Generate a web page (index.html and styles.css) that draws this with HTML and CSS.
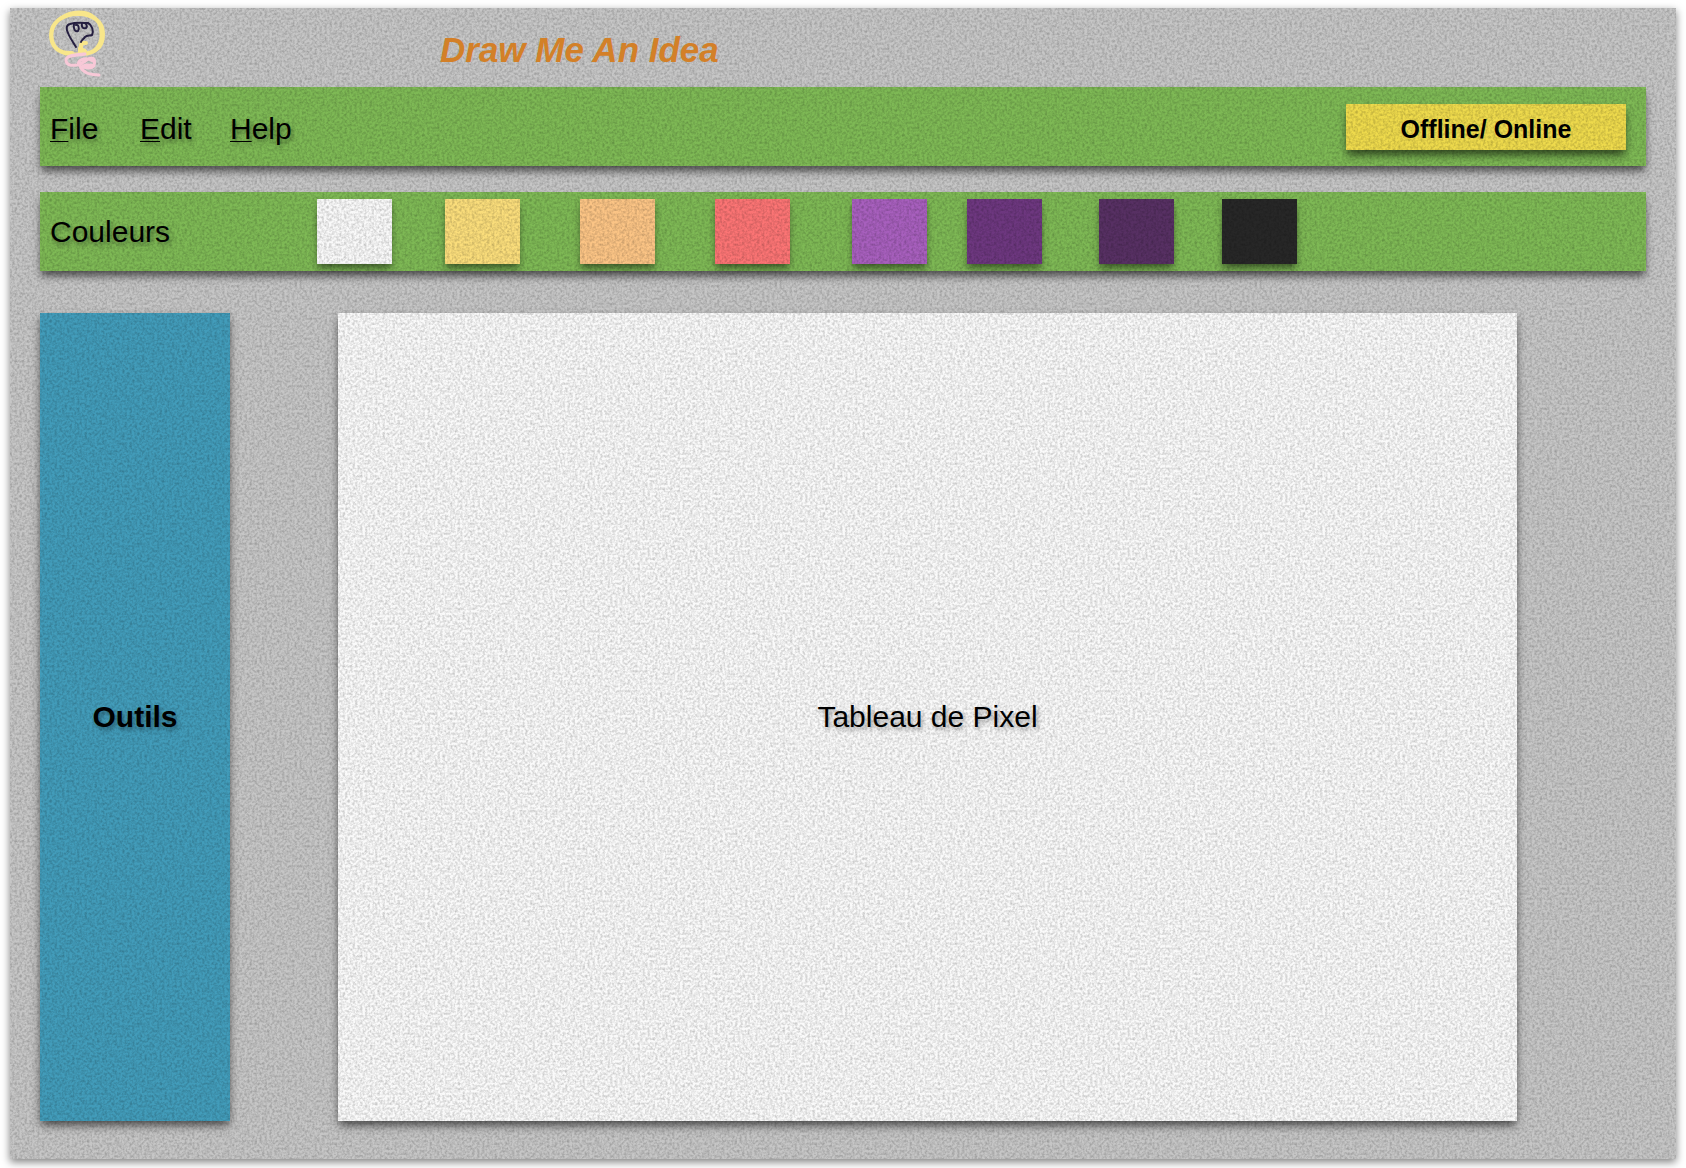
FILE: index.html
```html
<!DOCTYPE html>
<html lang="fr">
<head>
<meta charset="utf-8">
<title>Draw Me An Idea</title>
<link rel="stylesheet" href="styles.css">
</head>
<body>
<div class="app textured">
  <header class="header">
    <svg class="logo" viewBox="46 8 62 72" fill="none" stroke-linecap="round" stroke-linejoin="round" aria-hidden="true">
      <g stroke="#f8e68a">
        <path stroke-width="4" d="M88 53C98 51 103 44 103 34C103 21 92 14 78 14C62 14 51 23 51 35C51 46 58 54 72 53"/>
        <path stroke-width="3" d="M66 54C55 50 51 42 52 32C54 21 65 12 79 12C91 12 100 19 101 32C102 42 97 51 87 54H68"/>
        <path stroke-width="4" d="M81 52V45L83 43L86 43M83 50L85 51M80 48V53"/>
      </g>
      <path stroke="#251f40" stroke-width="2" d="M76 47C73 42 70 38 68 33C66 29 66 25 70 24C76 22 82 23 88 23C92 25 94 31 92 35C90 36 87 35 85 37C84 39 81 40 81 42"/>
      <path stroke="#251f40" stroke-width="2" d="M74 24C73 29 75 32 78 31C80 28 78 24 76 25M82 23C81 27 83 29 86 28C88 26 86 23 84 23"/>
      <path stroke="#f8c8d7" stroke-width="3" d="M84 54C75 54 66 56 66 60C66 65 71 66 77 65C84 64 86 59 91 58C95 58 95 62 94 65C93 69 88 68 83 67C78 66 77 62 81 60C85 58 90 59 93 61M68 57C74 55 80 55 85 54M80 66C82 71 88 75 99 75M83 66C87 64 90 65 94 66"/>
    </svg>
    <h1 class="title">Draw Me An Idea</h1>
  </header>

  <nav class="bar menu textured" aria-label="Menu">
    <button class="menu-item" type="button"><span class="key">F</span>ile</button>
    <button class="menu-item" type="button"><span class="key">E</span>dit</button>
    <button class="menu-item" type="button"><span class="key">H</span>elp</button>
    <button class="status textured" type="button">Offline/ Online</button>
  </nav>

  <section class="bar palette textured" aria-labelledby="palette-label">
    <h2 class="label" id="palette-label">Couleurs</h2>
    <button class="swatch textured white" type="button" aria-label="Blanc"></button>
    <button class="swatch textured yellow" type="button" aria-label="Jaune"></button>
    <button class="swatch textured orange" type="button" aria-label="Orange"></button>
    <button class="swatch textured red" type="button" aria-label="Rouge"></button>
    <button class="swatch textured violet" type="button" aria-label="Violet"></button>
    <button class="swatch textured purple" type="button" aria-label="Pourpre"></button>
    <button class="swatch textured plum" type="button" aria-label="Prune"></button>
    <button class="swatch textured black" type="button" aria-label="Noir"></button>
  </section>

  <main class="workspace">
    <aside class="panel tools textured"><h2 class="label strong">Outils</h2></aside>
    <section class="panel board textured"><p class="label">Tableau de Pixel</p></section>
  </main>
</div>
</body>
</html>
```
FILE: styles.css
```css
* {
  box-sizing: border-box;
}

body {
  margin: 0;
  padding: 8px 10px 9px;
  min-height: 100vh;
  display: flex;
  background: #fff;
  color: #000;
  font-family: "Liberation Sans", Arial, sans-serif;
  font-size: 30px;
  line-height: 36px;
}

h1, h2, p {
  margin: 0;
}

button {
  border: 0;
  padding: 0;
  color: inherit;
  font: inherit;
  cursor: pointer;
}

/* Fine paper grain laid over each surface colour */
.textured {
  background-image: url("data:image/svg+xml,%3Csvg xmlns='http://www.w3.org/2000/svg' width='480' height='480'%3E%3Cfilter id='g' x='0' y='0' width='100%25' height='100%25' color-interpolation-filters='sRGB'%3E%3CfeTurbulence type='fractalNoise' baseFrequency='.4' numOctaves='2' seed='4' stitchTiles='stitch'/%3E%3CfeColorMatrix values='0 0 0 0 0 0 0 0 0 0 0 0 0 0 0 .4 0 0 0 -.14'/%3E%3C/filter%3E%3Crect width='480' height='480' filter='url(%23g)'/%3E%3C/svg%3E");
}

.app {
  flex: 1;
  display: flex;
  flex-direction: column;
  padding: 0 30px 38px;
  background-color: #c6c6c6;
  box-shadow: 0 3px 8px rgba(0, 0, 0, .5);
}

.header {
  display: grid;
  grid-template-columns: 400px 1fr;
  height: 79px;
}

.logo {
  width: 62px;
  height: 72px;
  margin-left: 6px;
}

.title {
  padding-top: 22px;
  color: #d38028;
  font-size: 35px;
  font-style: italic;
  line-height: 40px;
}

.bar {
  min-height: 79px;
  background-color: #7eb955;
  box-shadow: 0 6px 8px -1px rgba(0, 0, 0, .6);
}

.menu {
  display: flex;
  align-items: center;
  padding: 0 20px 0 10px;
}

.menu-item {
  width: 90px;
  padding-top: 4px;
  background: none;
  text-align: left;
  text-shadow: 2px 3px 4px rgba(0, 0, 0, .35);
}

.key {
  text-decoration: underline 1px;
  text-underline-offset: 2px;
}

.status {
  width: 280px;
  height: 46px;
  margin-left: auto;
  padding-top: 4px;
  background-color: #eeda4c;
  box-shadow: 0 6px 8px -1px rgba(0, 0, 0, .6);
  font-size: 25px;
  font-weight: bold;
}

.palette {
  display: grid;
  grid-template-columns: 277fr 128fr 135fr 135fr 137fr 115fr 132fr 123fr 424fr;
  align-items: center;
  margin-top: 26px;
}

.label {
  font-size: 30px;
  font-weight: normal;
  text-shadow: 2px 3px 4px rgba(0, 0, 0, .35);
}

.strong {
  font-weight: bold;
}

.palette .label {
  padding-left: 10px;
}

.swatch {
  width: 75px;
  height: 65px;
  box-shadow: 0 5px 7px -1px rgba(0, 0, 0, .5);
}

.white { background-color: #f9f9f9; }
.yellow { background-color: #fadd7b; }
.orange { background-color: #fbc485; }
.red { background-color: #fb7474; }
.violet { background-color: #a75fbd; }
.purple { background-color: #6d377f; }
.plum { background-color: #573063; }
.black { background-color: #272727; }

.workspace {
  flex: 1;
  display: grid;
  grid-template-columns: 190fr 1179fr;
  gap: 108px;
  margin-top: 42px;
  padding-right: 129px;
}

.panel {
  display: flex;
  align-items: center;
  justify-content: center;
  min-height: 320px;
  box-shadow: 0 5px 9px -1px rgba(0, 0, 0, .65);
}

.tools {
  background-color: #429cba;
}

.board {
  background-color: #fafafa;
}
```
